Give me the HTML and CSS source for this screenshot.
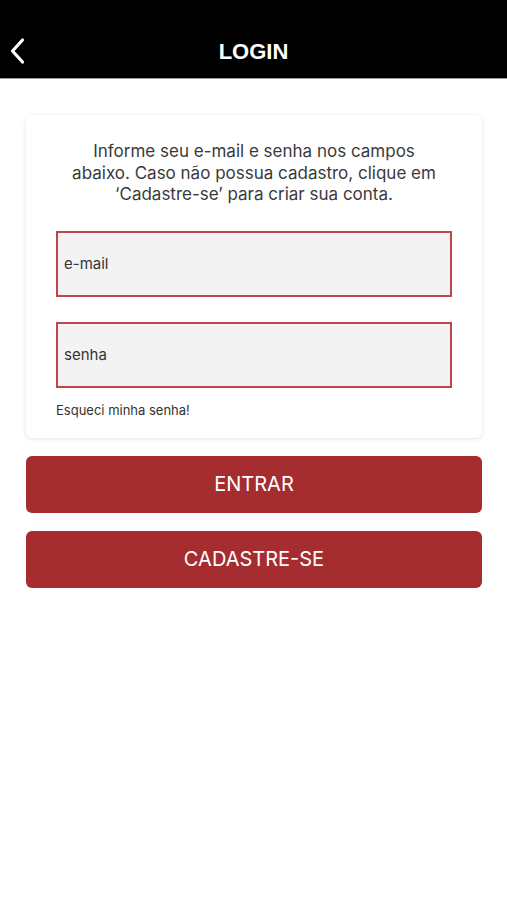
FILE: index.html
```html
<!DOCTYPE html>
<html lang="pt-BR">
<head>
    <meta charset="UTF-8">
    <meta name="viewport" content="width=device-width, initial-scale=1.0">
    <title>Login</title>
    <link rel="stylesheet" href="styles.css">
</head>
<body>

<header class="topbar">
    <button class="back" type="button" aria-label="Voltar">
        <svg width="18" height="28" viewBox="0 0 18 28">
            <path d="M14.5 3 L4.5 14 L14.5 25" fill="none" stroke="#fff" stroke-width="3.2" stroke-linecap="round" stroke-linejoin="round"/>
        </svg>
    </button>
    <h1>LOGIN</h1>
</header>

<main class="content">
    <form class="card" id="loginForm">
        <p class="intro">Informe seu e-mail e senha nos campos abaixo. Caso não possua cadastro, clique em ‘Cadastre-se’ para criar sua conta.</p>
        <input class="field" type="email" placeholder="e-mail">
        <input class="field" type="password" placeholder="senha">
        <a class="forgot" href="#">Esqueci minha senha!</a>
    </form>

    <button class="action" type="button">ENTRAR</button>
    <button class="action" type="button">CADASTRE-SE</button>
</main>

</body>
</html>
```

FILE: styles.css
```css
body {
    margin: 0;
    font-family: Inter, "Liberation Sans", Arial, sans-serif;
    background-color: #ffffff;
    color: #333333;
}
.topbar {
    position: relative;
    height: 78px;
    background-color: #000000;
    border-bottom: 1px solid #9a9a9a;
    display: flex;
    align-items: flex-end;
    justify-content: center;
}
.topbar h1 {
    margin: 0 0 12px;
    color: #ffffff;
    font-family: "Liberation Sans", Arial, sans-serif;
    font-size: 22px;
    font-weight: bold;
    line-height: 28px;
}
.back {
    position: absolute;
    left: 8px;
    bottom: 13px;
    padding: 0;
    border: none;
    background: none;
    display: flex;
}
.content {
    padding: 36px 25px 0 26px;
    display: flex;
    flex-direction: column;
    gap: 18px;
}
.card {
    background-color: #ffffff;
    border-radius: 6px;
    box-shadow: 0 1px 4px rgba(0, 0, 0, 0.12);
    padding: 26px 30px 20px;
    display: flex;
    flex-direction: column;
}
.intro {
    margin: 0 0 25px;
    padding: 0 10px;
    text-align: center;
    font-size: 17px;
    line-height: 21.5px;
    color: #3a3a3a;
}
.field {
    height: 66px;
    box-sizing: border-box;
    margin: 0 0 25px;
    padding: 0 6px;
    border: 2px solid #c1464a;
    border-radius: 0;
    background-color: #f3f3f3;
    font-family: inherit;
    font-size: 15px;
}
.field::placeholder {
    color: #333333;
}
.field:nth-of-type(2) {
    margin-bottom: 14px;
}
.forgot {
    font-size: 13px;
    color: #333333;
    text-decoration: none;
}
.action {
    height: 57px;
    border: none;
    border-radius: 6px;
    background-color: #a52d30;
    color: #ffffff;
    font-family: inherit;
    font-size: 20px;
}
```
